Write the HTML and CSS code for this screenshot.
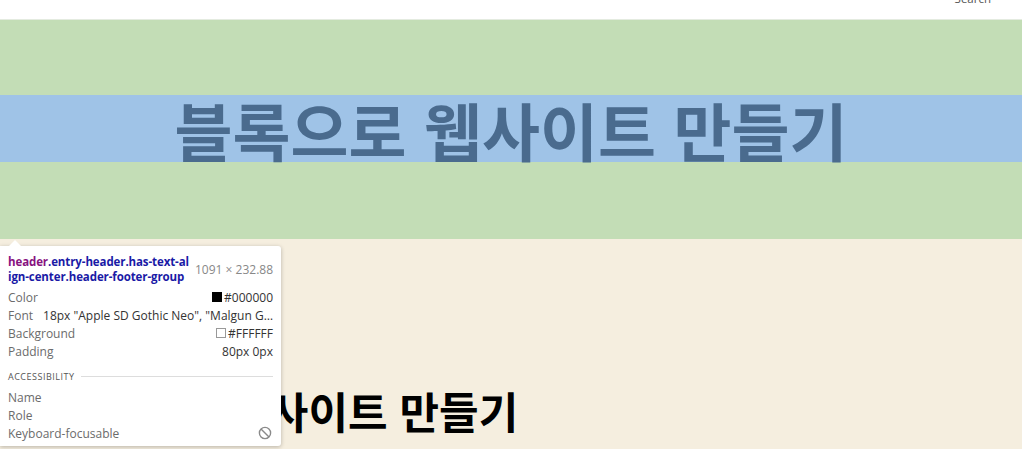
FILE: index.html
```html
<!DOCTYPE html>
<html lang="ko">
<head>
<meta charset="utf-8">
<title>블록으로 웹사이트 만들기</title>
<link rel="stylesheet" href="styles.css">
</head>
<body>
<div class="page">
  <div class="topbar"><span class="search">Search</span></div>
  <header class="entry-header">
    <div class="title-band"><h1 class="hero-title">블록으로 웹사이트 만들기</h1></div>
  </header>
  <main class="content">
    <h2 class="post-title">블록으로 웹사이트 만들기</h2>
  </main>
</div>
<div class="tooltip">
  <div class="tip-head">
    <div class="selector"><span class="line"><span class="tag">header</span>.entry-header.has-text-al</span><span class="line">ign-center.header-footer-group</span></div>
    <div class="dims">1091 × 232.88</div>
  </div>
  <div class="row"><span class="label">Color</span><span class="value"><i class="swatch black"></i>#000000</span></div>
  <div class="row"><span class="label">Font</span><span class="value font">18px "Apple SD Gothic Neo", "Malgun G…</span></div>
  <div class="row"><span class="label">Background</span><span class="value"><i class="swatch white"></i>#FFFFFF</span></div>
  <div class="row"><span class="label">Padding</span><span class="value">80px 0px</span></div>
  <div class="section"><span>ACCESSIBILITY</span><i class="rule"></i></div>
  <div class="row"><span class="label">Name</span></div>
  <div class="row"><span class="label">Role</span></div>
  <div class="row"><span class="label">Keyboard-focusable</span>
    <svg class="noicon" width="14" height="14" viewBox="0 0 14 14"><circle cx="7" cy="7" r="5.6" fill="none" stroke="#8a8a8a" stroke-width="1.4"/><line x1="3" y1="3" x2="11" y2="11" stroke="#8a8a8a" stroke-width="1.4"/></svg>
  </div>
</div>
</body>
</html>
```

FILE: styles.css
```css
* { box-sizing: border-box; }
html, body { margin: 0; padding: 0; background: #ffffff; height: 449px; overflow: hidden; }
body { font-family: "Noto Sans CJK KR", "Noto Sans", sans-serif; }

.page { width: 1022px; height: 449px; display: flex; flex-direction: column; }

.topbar {
  height: 20px;
  background: #ffffff;
  display: flex;
  justify-content: flex-end;
  padding-right: 31px;
  overflow: hidden;
  border-bottom: 1px solid #e4ebe0;
}
.search {
  font-family: "Open Sans", "Noto Sans", sans-serif;
  font-size: 11.5px;
  color: #555;
  line-height: 12px;
  margin-top: -7px;
}

.entry-header {
  height: 219px;
  background: #c3ddb6;
  padding-top: 75px;
}
.title-band {
  height: 67px;
  background: #9fc3e7;
  display: flex;
  justify-content: center;
  align-items: center;
}
.hero-title {
  margin: 0;
  font-family: "Noto Sans CJK KR", sans-serif;
  font-weight: 700;
  font-size: 63px;
  line-height: 67px;
  color: #4a6b8e;
}

.content {
  flex: 1;
  background: #f5eedf;
  padding-top: 145px;
  padding-left: 59px;
}
.post-title {
  margin: 0;
  font-family: "Noto Sans CJK KR", sans-serif;
  font-weight: 700;
  font-size: 43px;
  line-height: 52px;
  color: #000;
}

.tooltip {
  position: absolute;
  left: 0;
  top: 246px;
  width: 281px;
  height: 200px;
  background: #fff;
  border-radius: 0 3px 3px 0;
  box-shadow: 0 1px 4px rgba(0,0,0,0.25);
  padding: 8px 8px 0 8px;
  font-family: "Open Sans", "Noto Sans", sans-serif;
  font-size: 12px;
  color: #333;
}
.tooltip::before {
  content: "";
  position: absolute;
  left: 9px;
  top: -6px;
  border-left: 6px solid transparent;
  border-right: 6px solid transparent;
  border-bottom: 6px solid #fff;
}
.tip-head { display: flex; justify-content: space-between; align-items: center; margin-bottom: 4px; }
.selector {
  font-weight: 700;
  color: #1a1aa6;
  line-height: 15px;
  font-size: 11.5px;
  letter-spacing: -0.1px;
}
.selector .line { display: block; white-space: nowrap; }
.tag { color: #881280; }
.dims { color: #888; font-size: 12px; padding-top: 1px; }
.row {
  display: flex;
  justify-content: space-between;
  align-items: center;
  height: 18px;
  white-space: nowrap;
}
.label { color: #6b6b6b; }
.value { color: #333; display: flex; align-items: center; }
.value.font { color: #333; font-size: 12px; }
.swatch { display: inline-block; width: 10px; height: 10px; margin-right: 2px; border: 1px solid #777; }
.swatch.black { background: #000; border-color: #000; }
.swatch.white { background: #fff; border-color: #999; }
.section {
  display: flex;
  align-items: center;
  height: 12px;
  margin: 10px 0 6px;
  font-size: 9px;
  letter-spacing: 0.5px;
  color: #555;
}
.rule { flex: 1; height: 1px; background: #ddd; margin-left: 7px; }
.noicon { margin-right: 1px; }
```
